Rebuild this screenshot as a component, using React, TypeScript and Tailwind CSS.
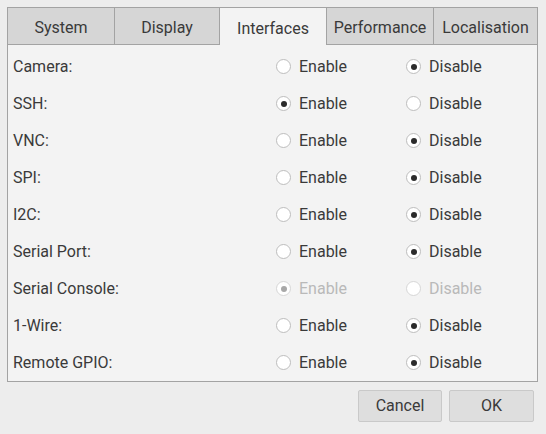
import { useState } from 'react';

const TABS = ['System', 'Display', 'Interfaces', 'Performance', 'Localisation'];
const TAB_WIDTHS = ['w-[107px]', 'w-[105px]', 'w-[107px]', 'w-[107px]', 'w-[105px]'];

type Row = { label: string; enabled: boolean; disabled?: boolean };

const ROWS: Row[] = [
  { label: 'Camera:', enabled: false },
  { label: 'SSH:', enabled: true },
  { label: 'VNC:', enabled: false },
  { label: 'SPI:', enabled: false },
  { label: 'I2C:', enabled: false },
  { label: 'Serial Port:', enabled: false },
  { label: 'Serial Console:', enabled: true, disabled: true },
  { label: '1-Wire:', enabled: false },
  { label: 'Remote GPIO:', enabled: false },
];

function Radio({ checked, disabled, label, onClick }: { checked: boolean; disabled?: boolean; label: string; onClick?: () => void }) {
  return (
    <button
      type="button"
      onClick={onClick}
      disabled={disabled}
      className={`flex items-center gap-[8px] ${disabled ? 'text-[#b9b9b9]' : 'text-[#3a3a3a]'}`}
    >
      <span
        className={`w-[15px] h-[15px] rounded-full border flex items-center justify-center bg-white ${
          disabled ? 'border-[#d6d6d6] bg-[#f7f7f7]' : 'border-[#bdbdbd]'
        }`}
      >
        {checked && <span className={`w-[6px] h-[6px] rounded-full ${disabled ? 'bg-[#a8a8a8]' : 'bg-[#2b2b2b]'}`} />}
      </span>
      <span>{label}</span>
    </button>
  );
}

export default function App() {
  const [rows, setRows] = useState(ROWS);

  const set = (i: number, v: boolean) =>
    setRows((r) => r.map((row, j) => (j === i ? { ...row, enabled: v } : row)));

  return (
    <div className="w-[546px] h-[434px] bg-[#ededed] font-['Roboto',sans-serif] text-[16px] text-[#3a3a3a] pt-[7px] pl-[7px] pr-[8px]">
      {/* Tabs */}
      <div className="flex h-[38px]">
        {TABS.map((t, i) => {
          const active = t === 'Interfaces';
          return (
            <div
              key={t}
              className={`${TAB_WIDTHS[i]} flex items-center justify-center pt-[4px] border-t border-l border-[#a3a3a3] ${
                i === TABS.length - 1 ? 'border-r' : ''
              } ${active ? 'bg-[#f3f3f3]' : 'bg-[#d6d6d6] border-b'}`}
            >
              {t}
            </div>
          );
        })}
      </div>

      {/* Panel */}
      <div className="bg-[#f3f3f3] border-l border-r border-b border-[#a3a3a3] pt-[3px] pl-[5px] h-[337px]">
        {rows.map((row, i) => (
          <div key={row.label} className="h-[37px] flex items-center">
            <div className="w-[263px]">{row.label}</div>
            <div className="w-[130px]">
              <Radio checked={row.enabled} disabled={row.disabled} label="Enable" onClick={() => set(i, true)} />
            </div>
            <div>
              <Radio checked={!row.enabled} disabled={row.disabled} label="Disable" onClick={() => set(i, false)} />
            </div>
          </div>
        ))}
      </div>

      {/* Buttons */}
      <div className="flex justify-end gap-[7px] mt-[8px] pr-[4px]">
        <button className="w-[84px] h-[32px] bg-[#dedede] border border-[#c9c9c9] rounded-[2px] text-[#3a3a3a]">Cancel</button>
        <button className="w-[85px] h-[32px] bg-[#dedede] border border-[#c9c9c9] rounded-[2px] text-[#3a3a3a]">OK</button>
      </div>
    </div>
  );
}
